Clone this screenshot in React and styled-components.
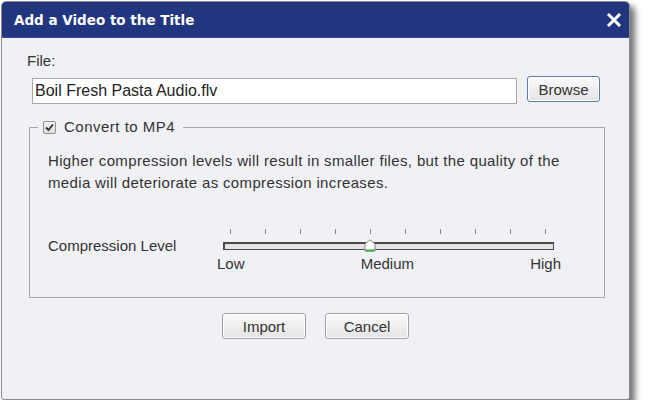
import React from 'react';
import styled, { createGlobalStyle } from 'styled-components';

const GlobalStyle = createGlobalStyle`
  body {
    margin: 0;
    background: #ffffff;
    font-family: "Liberation Sans", Arial, sans-serif;
  }
`;

const Dialog = styled.div`
  margin: 1px 0 0 1px;
  width: 627px;
  height: 397px;
  border: 1px solid #8c8c8c;
  border-radius: 5px 5px 3px 3px;
  background: #f0f1f5;
  box-shadow: 5px 5px 6px rgba(0, 0, 0, 0.55);
  display: flex;
  flex-direction: column;
  overflow: hidden;
`;

const TitleBar = styled.div`
  height: 35px;
  flex-shrink: 0;
  background: #22357f;
  border-bottom: 1px solid #3a4f98;
  display: flex;
  align-items: center;
  justify-content: space-between;
  padding: 0 7px 0 12px;
`;

const Title = styled.h1`
  margin: 0;
  color: #ffffff;
  font-family: "DejaVu Sans", Verdana, sans-serif;
  font-size: 13.5px;
  font-weight: bold;
`;

const CloseButton = styled.button`
  border: none;
  background: none;
  padding: 0;
  width: 16px;
  height: 16px;
  display: flex;
  align-items: center;
  justify-content: center;
  cursor: pointer;
`;

const Body = styled.div`
  flex: 1;
  display: flex;
  flex-direction: column;
  color: #333333;
  font-size: 15px;
`;

const FileLabel = styled.label`
  margin: 14px 0 0 25px;
  line-height: 18px;
`;

const FileRow = styled.div`
  display: flex;
  align-items: flex-start;
  margin: 8px 0 0 30px;
  gap: 10px;
`;

const FileInput = styled.div`
  width: 481px;
  height: 24px;
  border: 1px solid #a9a9a9;
  background: #ffffff;
  font-size: 16px;
  line-height: 24px;
  padding-left: 2px;
  box-sizing: content-box;
  color: #222;
`;

const Button = styled.button`
  width: ${p => p.$width}px;
  height: 26px;
  margin-top: ${p => p.$offset || 0}px;
  border: 1px solid ${p => (p.$primary ? '#5b7ea8' : '#a3a3a3')};
  border-radius: 3px;
  background: linear-gradient(#fbfbfb, #e4e4e4);
  font-family: "Liberation Sans", Arial, sans-serif;
  font-size: 15px;
  color: #333;
  padding: 0;
  cursor: pointer;
  box-shadow: inset 0 0 0 1px #ffffff;
`;

const Group = styled.fieldset`
  margin: 14px 0 0 27px;
  width: 538px;
  border: 1px solid #a8a8a8;
  padding: 14px 18px 24px 18px;
`;

const Legend = styled.legend`
  margin-left: -10px;
  padding: 0 8px 0 5px;
  display: flex;
  align-items: center;
  gap: 8px;
  font-size: 15px;
  line-height: 18px;
  letter-spacing: 0.5px;
  color: #333;
`;

const Check = styled.span`
  width: 11px;
  height: 11px;
  border: 1px solid #8e8f8f;
  border-radius: 2px;
  background: linear-gradient(#f4f4f4, #dcdcdc);
  display: inline-flex;
  align-items: center;
  justify-content: center;
`;

const Description = styled.p`
  margin: 0;
  line-height: 22px;
  letter-spacing: 0.35px;
  color: #333;
`;

const LevelRow = styled.div`
  display: flex;
  align-items: flex-start;
  margin-top: 35px;
`;

const LevelLabel = styled.span`
  width: 169px;
  line-height: 18px;
  margin-top: 8px;
`;

const Slider = styled.div`
  width: 344px;
  display: flex;
  flex-direction: column;
`;

const Ticks = styled.div`
  display: flex;
  justify-content: space-between;
  padding: 0 15px 0 13px;
  height: 5px;
`;

const Tick = styled.span`
  width: 1px;
  height: 5px;
  background: #8a8a8a;
`;

const Track = styled.div`
  position: relative;
  margin: 8px 7px 0 6px;
  height: 5px;
  border: 1px solid #4a4a4a;
  border-top-width: 2px;
  border-left-width: 2px;
  background: #e4e4e4;
`;

const Thumb = styled.svg`
  position: absolute;
  left: 139px;
  top: -5px;
`;

const Marks = styled.div`
  display: flex;
  justify-content: space-between;
  margin-top: 5px;
  line-height: 18px;
`;

const Actions = styled.div`
  display: flex;
  justify-content: center;
  gap: 19px;
  margin-top: 15px;
`;

const App = () => {
  return (
    <>
      <GlobalStyle />
      <Dialog>
        <TitleBar>
          <Title>Add a Video to the Title</Title>
          <CloseButton aria-label="Close">
            <svg width="14" height="14" viewBox="0 0 14 14">
              <path d="M2 2 L12 12 M12 2 L2 12" stroke="#ffffff" strokeWidth="3" strokeLinecap="square" />
            </svg>
          </CloseButton>
        </TitleBar>
        <Body>
          <FileLabel>File:</FileLabel>
          <FileRow>
            <FileInput>Boil Fresh Pasta Audio.flv</FileInput>
            <Button $primary $width={73} $offset={-2}>Browse</Button>
          </FileRow>
          <Group>
            <Legend>
              <Check>
                <svg width="9" height="9" viewBox="0 0 9 9">
                  <path d="M1 4.5 L3.5 7 L8 1.5" fill="none" stroke="#2b2b2b" strokeWidth="1.8" />
                </svg>
              </Check>
              Convert to MP4
            </Legend>
            <Description>
              Higher compression levels will result in smaller files, but the quality of the
              media will deteriorate as compression increases.
            </Description>
            <LevelRow>
              <LevelLabel>Compression Level</LevelLabel>
              <Slider>
                <Ticks>
                  {Array.from({ length: 10 }).map((_, i) => (
                    <Tick key={i} />
                  ))}
                </Ticks>
                <Track>
                  <Thumb width="12" height="13" viewBox="0 0 12 13">
                    <path d="M1 5 L6 0.8 L11 5 L11 12 L1 12 Z" fill="#ffffff" stroke="#8a8a8a" strokeWidth="1" />
                    <path d="M1.5 11.5 L10.5 11.5" stroke="#3cb043" strokeWidth="2" />
                  </Thumb>
                </Track>
                <Marks>
                  <span>Low</span>
                  <span>Medium</span>
                  <span>High</span>
                </Marks>
              </Slider>
            </LevelRow>
          </Group>
          <Actions>
            <Button $width={84}>Import</Button>
            <Button $width={84}>Cancel</Button>
          </Actions>
        </Body>
      </Dialog>
    </>
  );
};

export default App;
